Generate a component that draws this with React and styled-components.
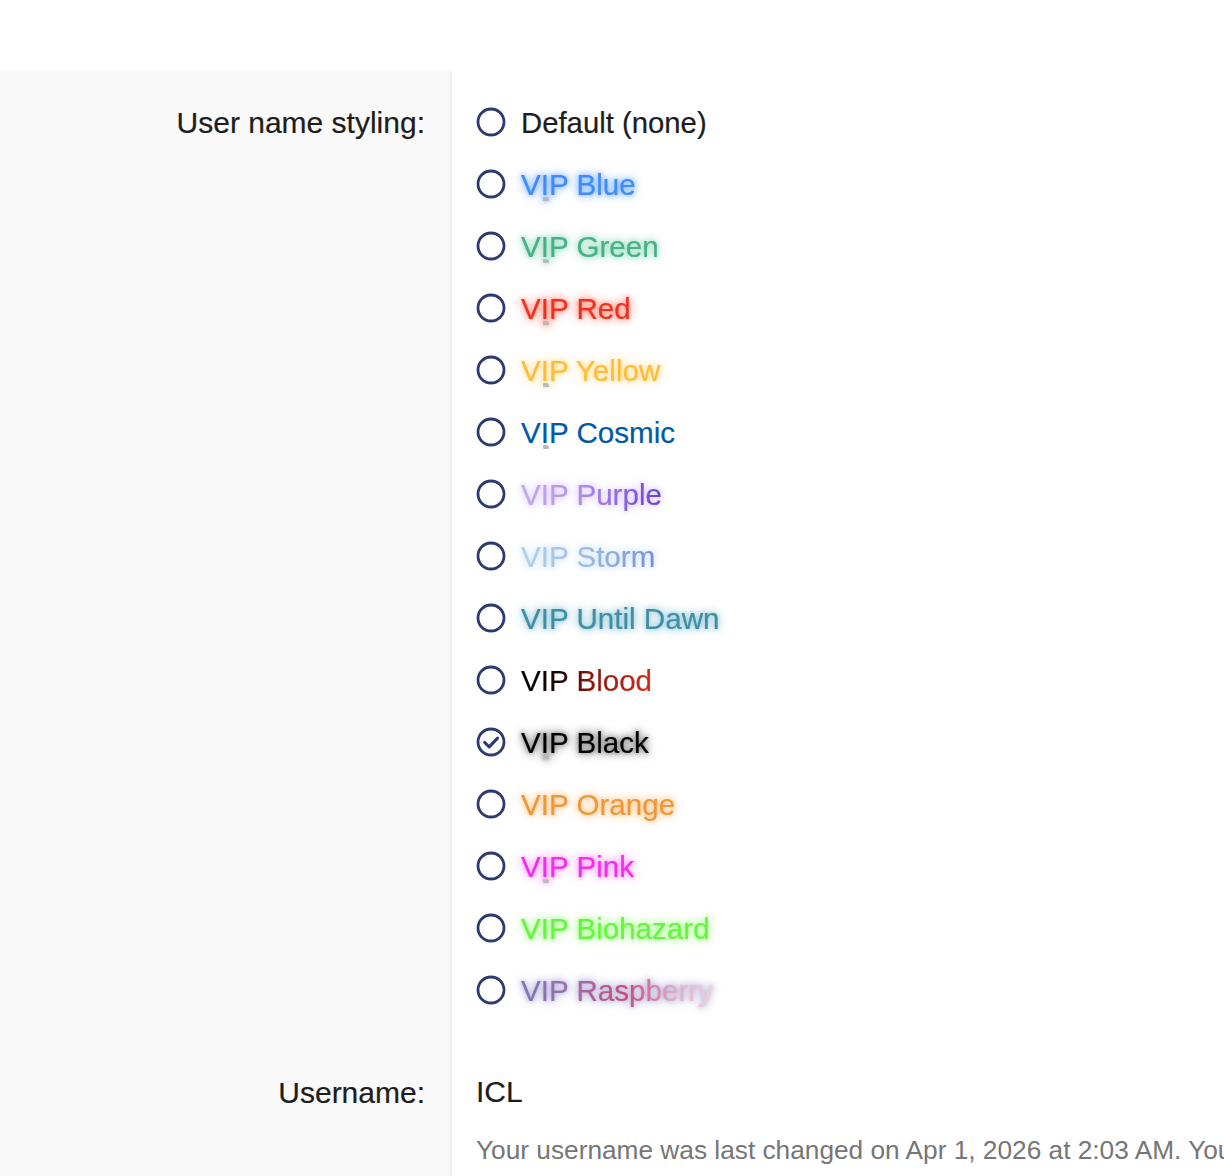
import React from "react"
import styled, { createGlobalStyle, css } from "styled-components"

const GlobalStyle = createGlobalStyle`
  html, body {
    margin: 0;
    background: #fff;
    overflow: hidden;
  }
  body {
    font-family: "Liberation Sans", Arial, sans-serif;
    color: #1d1d1d;
  }
`

const Page = styled.div`
  height: 1176px;
  padding-top: 71px;
  box-sizing: border-box;
  overflow: hidden;
  display: flex;
  flex-direction: column;
`

const FormRow = styled.div`
  display: grid;
  grid-template-columns: 452px 1fr;
  min-width: 0;
`

const Label = styled.div`
  background: #f9f9f9;
  border-right: 2px solid #eee;
  box-sizing: border-box;
  padding: ${props => props.$top}px 25px 0 0;
  text-align: right;
  font-size: 30px;
  line-height: 64px;
  height: ${props => props.$height}px;
  -webkit-text-stroke: 0.2px currentColor;
`

const Value = styled.div`
  padding: ${props => props.$top}px 0 0 24px;
  min-width: 0;
  overflow: hidden;
`

const ChoiceList = styled.div`
  display: flex;
  flex-direction: column;
`

const Choice = styled.div`
  display: flex;
  align-items: center;
  gap: 15px;
  height: 62px;
`

const Radio = styled.svg`
  width: 30px;
  height: 30px;
  flex: none;
`

const ChoiceText = styled.span`
  font-size: 29.3px;
  line-height: 36px;
  margin-top: 2px;
  color: #1d1d1d;
  -webkit-text-stroke: 0.2px currentColor;
`

const StyledName = styled.span`
  font-size: 29.6px;
  line-height: 36px;
  margin-top: 2px;
  position: relative;
  display: inline-block;
  color: ${props => props.$color || "transparent"};
  -webkit-text-stroke: 0.2px ${props => props.$color || "transparent"};
  ${props =>
    props.$gradient &&
    css`
      background: linear-gradient(90deg, ${props.$gradient});
      -webkit-background-clip: text;
      background-clip: text;
    `}
  ${props =>
    props.$glow &&
    css`
      filter: drop-shadow(0 0 2px ${props.$glow}) drop-shadow(0 0 5px ${props.$glow});
    `}
  ${props =>
    props.$speck &&
    css`
      &::after {
        content: "";
        position: absolute;
        left: 22px;
        bottom: 2px;
        width: 6px;
        height: 4px;
        background: #b9b9b9;
        border-radius: 1px 3px 1px 1px;
      }
    `}
`

const Username = styled.div`
  font-size: 30px;
  line-height: 40px;
  -webkit-text-stroke: 0.2px currentColor;
`

const Hint = styled.div`
  margin-top: 18px;
  font-size: 26.25px;
  line-height: 40px;
  color: #767676;
  white-space: nowrap;
`

const styles = [
  { name: "VIP Blue", color: "#3f8bfb", glow: "#8fbdff", speck: true },
  { name: "VIP Green", color: "#45b18b", glow: "#a6dfc9", speck: true },
  { name: "VIP Red", color: "#f0301f", glow: "#ff9a8c", speck: true },
  { name: "VIP Yellow", color: "#fdbd3b", glow: "#ffe3aa", speck: true },
  { name: "VIP Cosmic", color: "#0059a6", speck: true },
  { name: "VIP Purple", gradient: "#c4a8f0, #b596ea 35%, #6c3fd0", glow: "#e4d4fc" },
  { name: "VIP Storm", gradient: "#b0d2ea, #a2c2e4 40%, #7b90d2", glow: "#d8e9f9" },
  { name: "VIP Until Dawn", color: "#3f8ea6", glow: "#a4d0dc" },
  { name: "VIP Blood", gradient: "#000, #1c0402 30%, #8a140a 52%, #d62a1a" },
  { name: "VIP Black", color: "#000", glow: "#8a8a8a", speck: true, checked: true },
  { name: "VIP Orange", color: "#ee983c", glow: "#fcd0a0" },
  { name: "VIP Pink", color: "#f42cee", glow: "#fba8f8", speck: true },
  { name: "VIP Biohazard", color: "#66f53e", glow: "#b4fba0" },
  {
    name: "VIP Raspberry",
    gradient: "#7a76bb, #9a70a8 25%, #c84a78 55%, #e4a8c4 80%, #f0d4e0",
    glow: "#bcb8dc"
  }
]

function RadioIcon({ checked }) {
  return (
    <Radio viewBox="0 0 30 30" fill="none">
      <circle cx="15" cy="15" r="13" stroke="#2c3a70" strokeWidth="2.8" />
      {checked && (
        <path
          d="M8.6 15.4l4.6 4.5 8.4-8.8"
          stroke="#2c3a70"
          strokeWidth="3"
          strokeLinecap="round"
          strokeLinejoin="round"
        />
      )}
    </Radio>
  )
}

function App() {
  return (
    <Page>
      <GlobalStyle />
      <FormRow>
        <Label $top={20} $height={950}>
          User name styling:
        </Label>
        <Value $top={20}>
          <ChoiceList>
            <Choice>
              <RadioIcon />
              <ChoiceText>Default (none)</ChoiceText>
            </Choice>
            {styles.map(s => (
              <Choice key={s.name}>
                <RadioIcon checked={s.checked} />
                <StyledName
                  $color={s.color}
                  $gradient={s.gradient}
                  $glow={s.glow}
                  $speck={s.speck}
                >
                  {s.name}
                </StyledName>
              </Choice>
            ))}
          </ChoiceList>
        </Value>
      </FormRow>
      <FormRow>
        <Label $top={40} $height={300}>
          Username:
        </Label>
        <Value $top={51}>
          <Username>ICL</Username>
          <Hint>Your username was last changed on Apr 1, 2026 at 2:03 AM. You</Hint>
        </Value>
      </FormRow>
    </Page>
  )
}

export default App
